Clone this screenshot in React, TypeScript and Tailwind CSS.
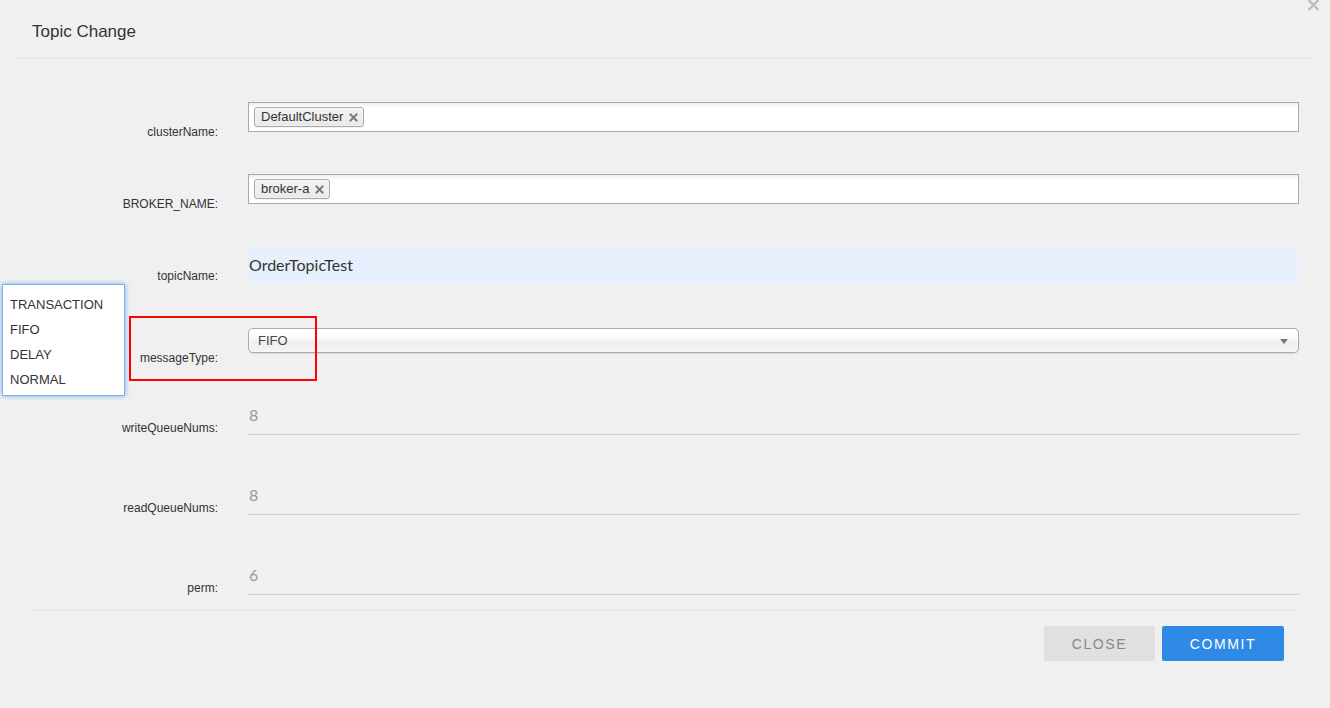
import React from "react";

const sans = { fontFamily: '"Liberation Sans", Arial, sans-serif' };

function Tag({ text }: { text: string }) {
  return (
    <span className="relative inline-flex h-[20px] items-center rounded-[3px] border border-[#aaa] bg-gradient-to-b from-[#f4f4f4] to-[#e8e8e8] pl-[6px] pr-[20px] text-[13px] leading-[18px] text-[#333] shadow-[0_0_2px_white_inset,0_1px_0_rgba(0,0,0,0.05)]">
      {text}
      <svg className="absolute right-[5px] top-[5px]" width="9" height="9" viewBox="0 0 9 9">
        <path d="M1.5 1.5 L7.5 7.5 M7.5 1.5 L1.5 7.5" stroke="#7a7a7a" strokeWidth="2" strokeLinecap="square" />
      </svg>
    </span>
  );
}

function MultiBox({ value }: { value: string }) {
  return (
    <div className="flex h-[30px] items-start border border-[#aaa] bg-gradient-to-b from-[#eee] from-[1%] to-white to-[15%] pl-[5px] pt-[3.5px]">
      <Tag text={value} />
    </div>
  );
}

function Row({
  label,
  height,
  children,
}: {
  label: string;
  height: string;
  children: React.ReactNode;
}) {
  return (
    <div className={`flex ${height}`}>
      <div className="w-[218px] shrink-0 pt-[23px] text-right text-[12px] leading-[14px] text-[#333]">
        {label}
      </div>
      <div className="ml-[30px] mr-[31px] flex-1">{children}</div>
    </div>
  );
}

function Underlined({ value }: { value: string }) {
  return (
    <div
      className="h-[37px] border-b border-[#d2d2d2] pl-[1px] pt-[5px] text-[16px] leading-[24px] text-[#999]"
      style={{ fontFamily: 'Lato, "Open Sans", sans-serif' }}
    >
      {value}
    </div>
  );
}

export default function App() {
  const options = ["TRANSACTION", "FIFO", "DELAY", "NORMAL"];
  return (
    <div className="relative h-[708px] w-[1330px] overflow-hidden bg-[#f0f0f0]" style={sans}>
      {/* dismiss icon, partly above the top edge */}
      <svg className="absolute left-[1307px] top-[-1px]" width="13" height="12" viewBox="0 0 13 12">
        <path d="M1.5 1 L11.5 11 M11.5 1 L1.5 11" stroke="#bdbdbd" strokeWidth="2.4" />
      </svg>

      {/* header */}
      <div className="mx-[16px] h-[59px] border-b border-[#e3e3e3] pl-[16px] pt-[22px]">
        <h2 className="text-[17px] leading-[20px] font-normal text-[#333]">Topic Change</h2>
      </div>

      {/* form */}
      <div className="pt-[43px]">
        <Row label="clusterName:" height="h-[72px]">
          <MultiBox value="DefaultCluster" />
        </Row>
        <Row label="BROKER_NAME:" height="h-[72px]">
          <MultiBox value="broker-a" />
        </Row>
        <Row label="topicName:" height="h-[82px]">
          <div
            className="h-[38px] bg-[#e8f0fd] pl-[1px] pt-[7px] text-[16px] leading-[24px] text-[#333]"
            style={{ fontFamily: 'Lato, "Open Sans", sans-serif' }}
          >
            OrderTopicTest
          </div>
        </Row>
        <Row label="messageType:" height="h-[70px]">
          <div className="relative flex h-[25px] items-center rounded-[5px] border border-[#aaa] bg-[linear-gradient(#fff_20%,#f6f6f6_50%,#eee_52%,#f4f4f4_100%)] pl-[9px] text-[13px] text-[#444] shadow-[0_0_3px_white_inset,0_1px_1px_rgba(0,0,0,0.1)]">
            FIFO
            <svg className="absolute right-[10px] top-[10px]" width="8" height="5" viewBox="0 0 8 5">
              <path d="M0 0 L8 0 L4 5 Z" fill="#777" />
            </svg>
          </div>
        </Row>
        <Row label="writeQueueNums:" height="h-[80px]">
          <Underlined value="8" />
        </Row>
        <Row label="readQueueNums:" height="h-[80px]">
          <Underlined value="8" />
        </Row>
        <Row label="perm:" height="h-[37px]">
          <Underlined value="6" />
        </Row>
      </div>

      {/* footer */}
      <div className="ml-[32px] mr-[31px] mt-[15px] border-t border-[#e3e3e3]" />
      <div className="mt-[15px] flex justify-end gap-[7px] pr-[46px]">
        <button className="h-[35px] w-[111px] rounded-[2px] bg-[#e0e0e0] pt-[2px] text-[14px] tracking-[1.6px] text-[#888]">
          CLOSE
        </button>
        <button className="h-[35px] w-[122px] rounded-[2px] bg-[#2f8ae6] pt-[2px] text-[14px] tracking-[1.6px] text-white">
          COMMIT
        </button>
      </div>

      {/* open option list */}
      <div className="absolute left-[2px] top-[284px] h-[112px] w-[123px] border border-[#7fb0f5] bg-white pl-[7px] pt-[7px] shadow-[0_0_5px_rgba(70,140,245,0.7)]">
        {options.map((o) => (
          <div key={o} className="text-[13px] leading-[25px] text-[#333]">
            {o}
          </div>
        ))}
      </div>

      {/* highlight frame */}
      <div className="absolute left-[129px] top-[316px] h-[65px] w-[188px] border-2 border-[#ff0000]" />
    </div>
  );
}
